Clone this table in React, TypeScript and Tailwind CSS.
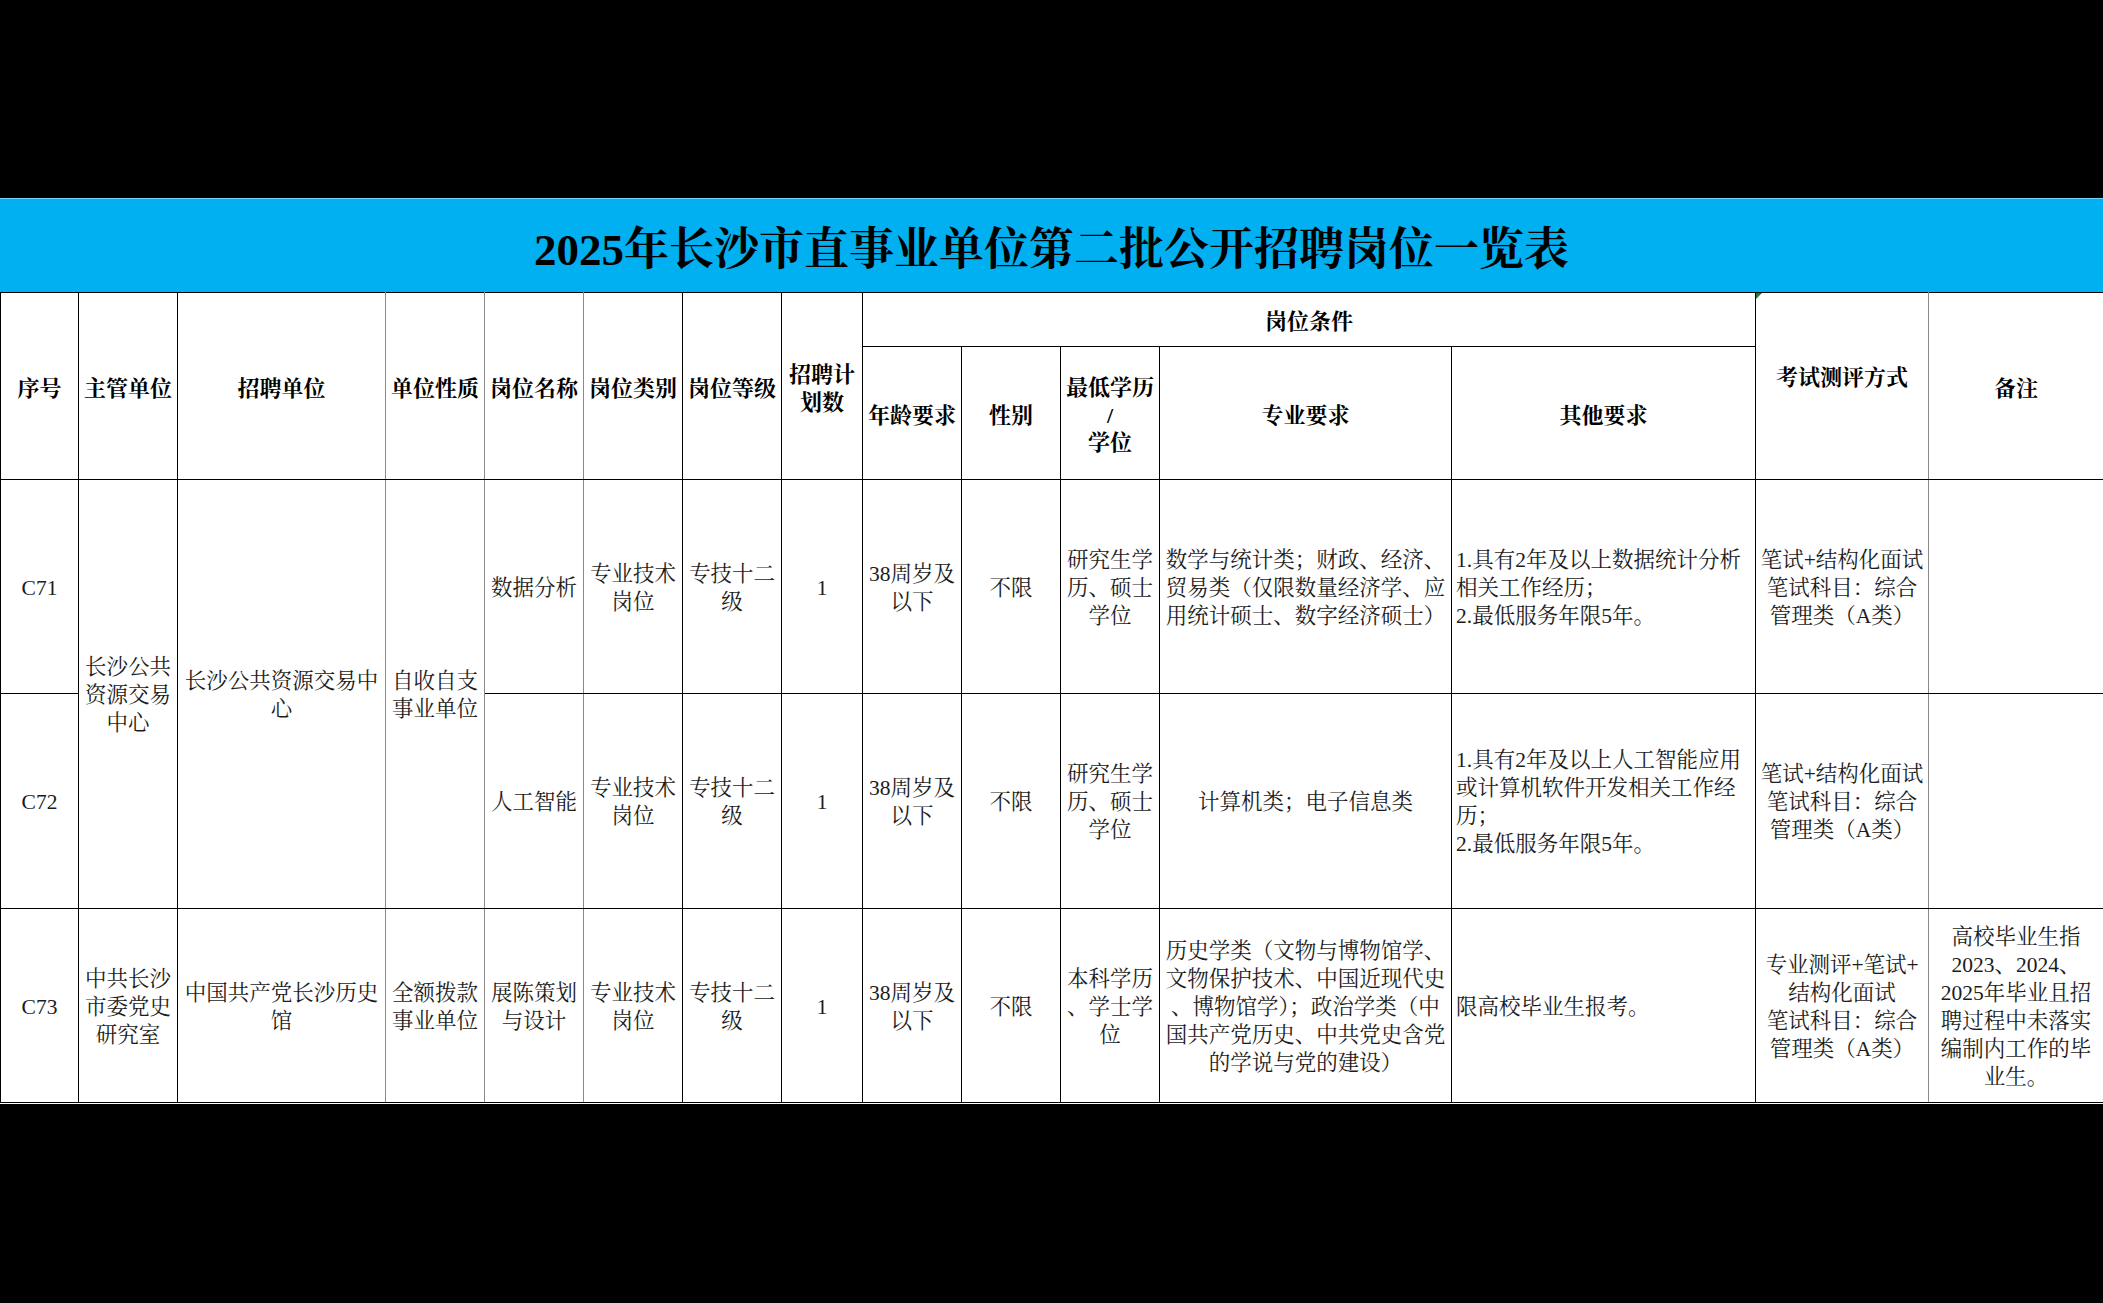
import React from "react";

const FONT = "font-['Liberation_Serif','Noto_Serif_CJK_SC','Noto_Sans_CJK_SC',serif]";

const colWidths = [
  "w-[78px]",
  "w-[99px]",
  "w-[208px]",
  "w-[99px]",
  "w-[99px]",
  "w-[99px]",
  "w-[99px]",
  "w-[81px]",
  "w-[99px]",
  "w-[99px]",
  "w-[99px]",
  "w-[292px]",
  "w-[304px]",
  "w-[173px]",
  "w-[175px]",
];

const H =
  "border border-black p-0 pt-[5px] align-middle text-center font-bold text-[22px] leading-[27.5px] text-black whitespace-nowrap";
const D =
  "border border-black p-0 pt-[2px] align-middle text-center text-[21.5px] leading-[28px] text-[#1c1c1c] whitespace-nowrap";
const G = " border-r-[#8a8a8a]";

function Lines({ items }: { items: string[] }) {
  return (
    <>
      {items.map((t, i) => (
        <React.Fragment key={i}>
          {i > 0 && <br />}
          {t}
        </React.Fragment>
      ))}
    </>
  );
}

export default function App() {
  return (
    <div className={`w-[2103px] h-[1303px] bg-black flex flex-col ${FONT}`}>
      <div className="h-[198px] shrink-0" />
      <div className="h-[94px] shrink-0 bg-[#00b0f0] border-t border-t-[#6fd3f7] flex items-center justify-center pt-[10px]">
        <span className="text-[45px] leading-none font-bold text-black">
          2025年长沙市直事业单位第二批公开招聘岗位一览表
        </span>
      </div>
      <table className="table-fixed border-collapse w-[2103px] bg-white shrink-0">
        <colgroup>
          {colWidths.map((w, i) => (
            <col key={i} className={w} />
          ))}
        </colgroup>
        <tbody>
          <tr className="h-[54px]">
            <td rowSpan={2} className={H}>序号</td>
            <td rowSpan={2} className={H}>主管单位</td>
            <td rowSpan={2} className={H + G}>招聘单位</td>
            <td rowSpan={2} className={H + G}>单位性质</td>
            <td rowSpan={2} className={H + G}>岗位名称</td>
            <td rowSpan={2} className={H}>岗位类别</td>
            <td rowSpan={2} className={H}>岗位等级</td>
            <td rowSpan={2} className={H}>
              <Lines items={["招聘计", "划数"]} />
            </td>
            <td colSpan={5} className={H}>岗位条件</td>
            <td rowSpan={2} className={H + G + " relative pb-[22px]"}>
              <div className="absolute top-0 left-0 w-0 h-0 border-t-[6px] border-t-[#1f7a35] border-r-[6px] border-r-transparent" />
              考试测评方式
            </td>
            <td rowSpan={2} className={H}>备注</td>
          </tr>
          <tr className="h-[133px]">
            <td className={H}>年龄要求</td>
            <td className={H}>性别</td>
            <td className={H}>
              <Lines items={["最低学历", "/", "学位"]} />
            </td>
            <td className={H}>专业要求</td>
            <td className={H}>其他要求</td>
          </tr>

          <tr className="h-[214px]">
            <td className={D}>C71</td>
            <td rowSpan={2} className={D}>
              <Lines items={["长沙公共", "资源交易", "中心"]} />
            </td>
            <td rowSpan={2} className={D + G}>
              <Lines items={["长沙公共资源交易中", "心"]} />
            </td>
            <td rowSpan={2} className={D + G}>
              <Lines items={["自收自支", "事业单位"]} />
            </td>
            <td className={D + G}>数据分析</td>
            <td className={D}>
              <Lines items={["专业技术", "岗位"]} />
            </td>
            <td className={D}>
              <Lines items={["专技十二", "级"]} />
            </td>
            <td className={D}>1</td>
            <td className={D}>
              <Lines items={["38周岁及", "以下"]} />
            </td>
            <td className={D}>不限</td>
            <td className={D}>
              <Lines items={["研究生学", "历、硕士", "学位"]} />
            </td>
            <td className={D}>
              <Lines
                items={[
                  "数学与统计类；财政、经济、",
                  "贸易类（仅限数量经济学、应",
                  "用统计硕士、数字经济硕士）",
                ]}
              />
            </td>
            <td className={D + " text-left pl-[4px]"}>
              <Lines
                items={[
                  "1.具有2年及以上数据统计分析",
                  "相关工作经历；",
                  "2.最低服务年限5年。",
                ]}
              />
            </td>
            <td className={D + G}>
              <Lines items={["笔试+结构化面试", "笔试科目：综合", "管理类（A类）"]} />
            </td>
            <td className={D}></td>
          </tr>

          <tr className="h-[215px]">
            <td className={D}>C72</td>
            <td className={D + G}>人工智能</td>
            <td className={D}>
              <Lines items={["专业技术", "岗位"]} />
            </td>
            <td className={D}>
              <Lines items={["专技十二", "级"]} />
            </td>
            <td className={D}>1</td>
            <td className={D}>
              <Lines items={["38周岁及", "以下"]} />
            </td>
            <td className={D}>不限</td>
            <td className={D}>
              <Lines items={["研究生学", "历、硕士", "学位"]} />
            </td>
            <td className={D}>计算机类；电子信息类</td>
            <td className={D + " text-left pl-[4px]"}>
              <Lines
                items={[
                  "1.具有2年及以上人工智能应用",
                  "或计算机软件开发相关工作经",
                  "历；",
                  "2.最低服务年限5年。",
                ]}
              />
            </td>
            <td className={D + G}>
              <Lines items={["笔试+结构化面试", "笔试科目：综合", "管理类（A类）"]} />
            </td>
            <td className={D}></td>
          </tr>

          <tr className="h-[194px]">
            <td className={D}>C73</td>
            <td className={D}>
              <Lines items={["中共长沙", "市委党史", "研究室"]} />
            </td>
            <td className={D + G}>
              <Lines items={["中国共产党长沙历史", "馆"]} />
            </td>
            <td className={D + G}>
              <Lines items={["全额拨款", "事业单位"]} />
            </td>
            <td className={D + G}>
              <Lines items={["展陈策划", "与设计"]} />
            </td>
            <td className={D}>
              <Lines items={["专业技术", "岗位"]} />
            </td>
            <td className={D}>
              <Lines items={["专技十二", "级"]} />
            </td>
            <td className={D}>1</td>
            <td className={D}>
              <Lines items={["38周岁及", "以下"]} />
            </td>
            <td className={D}>不限</td>
            <td className={D}>
              <Lines items={["本科学历", "、学士学", "位"]} />
            </td>
            <td className={D}>
              <Lines
                items={[
                  "历史学类（文物与博物馆学、",
                  "文物保护技术、中国近现代史",
                  "、博物馆学）；政治学类（中",
                  "国共产党历史、中共党史含党",
                  "的学说与党的建设）",
                ]}
              />
            </td>
            <td className={D + " text-left pl-[4px]"}>限高校毕业生报考。</td>
            <td className={D + G}>
              <Lines
                items={["专业测评+笔试+", "结构化面试", "笔试科目：综合", "管理类（A类）"]}
              />
            </td>
            <td className={D}>
              <Lines
                items={[
                  "高校毕业生指",
                  "2023、2024、",
                  "2025年毕业且招",
                  "聘过程中未落实",
                  "编制内工作的毕",
                  "业生。",
                ]}
              />
            </td>
          </tr>
        </tbody>
      </table>
      <div className="flex-1 bg-black border-t border-t-white" />
    </div>
  );
}
